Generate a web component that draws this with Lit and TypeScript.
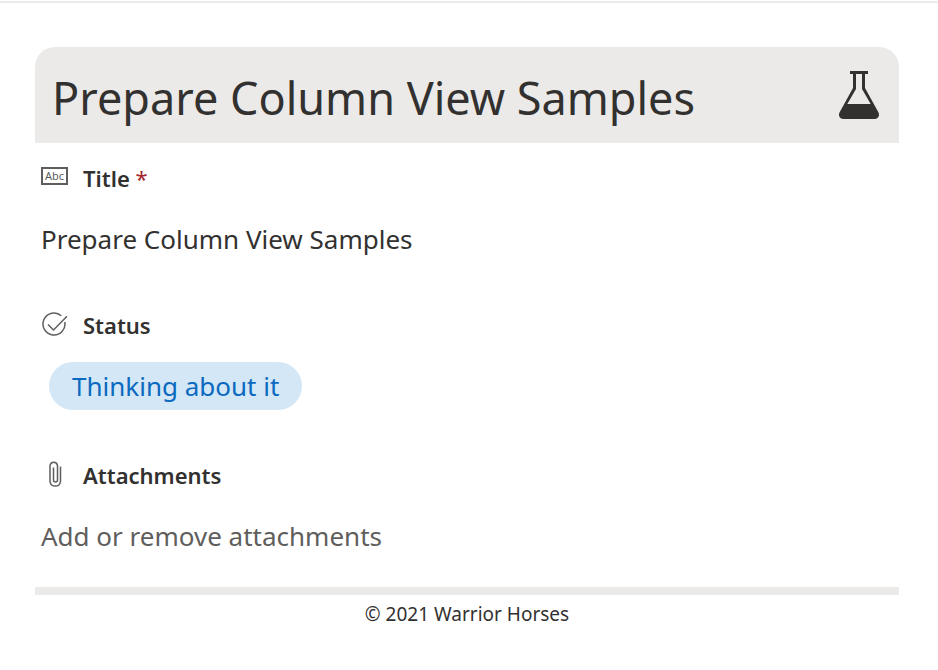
import { LitElement, html, css, svg } from "lit";
import { customElement, property } from "lit/decorators.js";

const flaskIcon = svg`
  <svg class="flask" viewBox="0 0 42 50" aria-hidden="true">
    <path fill="#323130" fill-rule="evenodd" d="M12 1h18v3h-3v14l13.500 24.500c1.500 3.500-.5 6.500-3.800 6.500H5.300c-3.300 0-5.300-3-3.800-6.500L15 18V4h-3zM18 4v15L9.300 34h23.400L24 19V4z"/>
  </svg>`;

const textIcon = svg`
  <svg class="icon" viewBox="0 0 28 28" aria-hidden="true">
    <rect x="1" y="4" width="25" height="16" fill="none" stroke="#605e5c" stroke-width="2"/>
    <text x="13.500" y="16" text-anchor="middle" font-family="Noto Sans, sans-serif" font-size="11" fill="#605e5c">Abc</text>
  </svg>`;

const statusIcon = svg`
  <svg class="icon" viewBox="0 0 28 28" aria-hidden="true" fill="none" stroke="#605e5c" stroke-width="1.500">
    <path d="M20.300 4.800A11 11 0 1 0 23.800 11"/>
    <path d="M7 13.500l5.500 5.500L26 5.200"/>
  </svg>`;

const clipIcon = svg`
  <svg class="icon" viewBox="0 0 28 28" aria-hidden="true" fill="none" stroke="#605e5c" stroke-width="1.500">
    <path d="M19.500 5.500v15a5.300 5.300 0 0 1-10.500 0V4.500a3.800 3.800 0 0 1 7.500 0V19a2 2 0 0 1-4 0V6.500"/>
  </svg>`;

@customElement("form-field")
export class FormField extends LitElement {
  @property() label = "";
  @property({ type: Boolean }) required = false;
  @property({ attribute: false }) icon: unknown;

  static styles = css`
    :host { display: block; }
    .head { display: flex; align-items: center; gap: 14px; height: 26px; }
    .label { margin: 0; font-size: 22px; line-height: 26px; font-weight: 600; }
    .required { color: #a4262c; font-weight: 400; }
    .icon { width: 28px; height: 28px; flex: none; }
  `;

  render() {
    return html`
      <div class="head">
        ${this.icon}
        <h2 class="label">${this.label}${this.required ? html` <span class="required">*</span>` : ""}</h2>
      </div>
      <slot></slot>
    `;
  }
}

@customElement("app-root")
export class AppRoot extends LitElement {
  static styles = css`
    :host {
      display: block;
      border-top: 1px solid #fff;
      font-family: "Noto Sans", "Open Sans", sans-serif;
      color: #323130;
      background: #fff;
    }
    .panel { border-top: 2px solid #edebe9; padding: 44px 39px 40px 35px; }
    .header {
      display: flex;
      align-items: center;
      justify-content: space-between;
      gap: 16px;
      min-height: 96px;
      padding: 0 19px 0 17px;
      box-sizing: border-box;
      border-radius: 20px 20px 0 0;
      background: #ebeae8;
    }
    .title { margin: 0; padding-top: 6px; font-size: 45px; line-height: 64px; font-weight: 400; }
    .flask { width: 42px; height: 50px; flex: none; }
    .fields { display: flex; flex-direction: column; padding: 22px 6px 33px; }
    .value { margin: 30px 0 55px; font-size: 26px; line-height: 36px; }
    .pill {
      display: inline-block;
      margin: 24px 8px 52px;
      padding: 0 23px;
      border-radius: 24px;
      background: #d4e7f6;
      color: #0b6abf;
      font-size: 26px;
      line-height: 48px;
    }
    .attach {
      display: block;
      margin: 30px 0 0;
      padding: 0;
      border: 0;
      background: none;
      font: inherit;
      font-size: 26px;
      line-height: 36px;
      color: #605e5c;
      text-align: left;
      cursor: pointer;
    }
    .footer {
      border-top: 8px solid #ebeae8;
      padding-top: 6px;
      text-align: center;
      font-size: 19px;
      line-height: 26px;
    }
  `;

  render() {
    return html`
      <main class="panel">
        <header class="header">
          <h1 class="title">Prepare Column View Samples</h1>
          ${flaskIcon}
        </header>
        <div class="fields">
          <form-field label="Title" required .icon=${textIcon}>
            <p class="value">Prepare Column View Samples</p>
          </form-field>
          <form-field label="Status" .icon=${statusIcon}>
            <span class="pill">Thinking about it</span>
          </form-field>
          <form-field label="Attachments" .icon=${clipIcon}>
            <button class="attach" type="button">Add or remove attachments</button>
          </form-field>
        </div>
        <footer class="footer">© 2021 Warrior Horses</footer>
      </main>
    `;
  }
}
